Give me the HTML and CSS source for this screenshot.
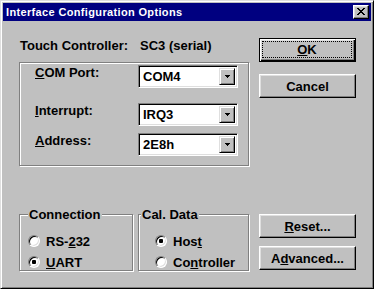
FILE: index.html
```html
<!DOCTYPE html>
<html lang="en">
<head>
  <meta charset="UTF-8" />
  <title>Interface Configuration Options</title>
  <link rel="stylesheet" href="styles.css">
</head>
<body>
  <div class="window">
    <div class="titlebar">
      <span class="title">Interface Configuration Options</span>
      <button class="close" aria-label="Close">
        <svg width="8" height="7" viewBox="0 0 8 7" shape-rendering="crispEdges">
          <path fill="#000" d="M0 0h2v1h-2zM6 0h2v1h-2zM1 1h2v1h-2zM5 1h2v1h-2zM2 2h4v1h-4zM3 3h2v1h-2zM2 4h4v1h-4zM1 5h2v1h-2zM5 5h2v1h-2zM0 6h2v1h-2zM6 6h2v1h-2z"/>
        </svg>
      </button>
    </div>

    <div class="client">
      <div class="section top">
        <div class="main">
          <div class="controller">
            <span class="controller-label">Touch Controller:</span>
            <span>SC3 (serial)</span>
          </div>

          <div class="etched port-group">
            <div class="field field-com">
              <label><u>C</u>OM Port:</label>
              <div class="combo">
                <span class="combo-value">COM4</span>
                <span class="combo-button">
                  <svg width="5" height="3" viewBox="0 0 5 3" shape-rendering="crispEdges"><path fill="#000" d="M0 0h5v1h-5zM1 1h3v1h-3zM2 2h1v1h-1z"/></svg>
                </span>
              </div>
            </div>
            <div class="field field-irq">
              <label><u>I</u>nterrupt:</label>
              <div class="combo">
                <span class="combo-value">IRQ3</span>
                <span class="combo-button">
                  <svg width="5" height="3" viewBox="0 0 5 3" shape-rendering="crispEdges"><path fill="#000" d="M0 0h5v1h-5zM1 1h3v1h-3zM2 2h1v1h-1z"/></svg>
                </span>
              </div>
            </div>
            <div class="field field-addr">
              <label><u>A</u>ddress:</label>
              <div class="combo">
                <span class="combo-value">2E8h</span>
                <span class="combo-button">
                  <svg width="5" height="3" viewBox="0 0 5 3" shape-rendering="crispEdges"><path fill="#000" d="M0 0h5v1h-5zM1 1h3v1h-3zM2 2h1v1h-1z"/></svg>
                </span>
              </div>
            </div>
          </div>
        </div>

        <div class="buttons">
          <button class="btn btn-default btn-ok"><span class="focus-ring"><u>O</u>K</span></button>
          <button class="btn btn-cancel">Cancel</button>
        </div>
      </div>

      <div class="section bottom">
        <div class="options">
          <div class="etched group-box connection">
            <span class="group-title">Connection</span>
            <div class="radio-row first"><span class="radio"></span><span class="radio-text">RS-<u>2</u>32</span></div>
            <div class="radio-row"><span class="radio checked"></span><span class="radio-text"><u>U</u>ART</span></div>
          </div>
          <div class="etched group-box cal-data">
            <span class="group-title">Cal. Data</span>
            <div class="radio-row first"><span class="radio checked"></span><span class="radio-text">Hos<u>t</u></span></div>
            <div class="radio-row"><span class="radio"></span><span class="radio-text">Co<u>n</u>troller</span></div>
          </div>
        </div>

        <div class="buttons">
          <button class="btn btn-reset"><u>R</u>eset...</button>
          <button class="btn btn-advanced">A<u>d</u>vanced...</button>
        </div>
      </div>
    </div>
  </div>
</body>
</html>
```

FILE: styles.css
```css
body {
  margin: 0;
  background: #c0c0c0;
  font-family: "Liberation Sans", Arial, sans-serif;
  font-size: 13px;
  font-weight: bold;
  line-height: 15px;
  color: #000;
}
u {
  text-decoration: underline;
  text-underline-offset: 1px;
}

/* window frame */
.window {
  width: 374px;
  height: 289px;
  box-sizing: border-box;
  padding: 2px;
  background: #c0c0c0;
  border: 1px solid;
  border-color: #dfdfdf #000 #000 #dfdfdf;
  box-shadow: inset 1px 1px #fff, inset -1px -1px #808080;
}
.titlebar {
  height: 18px;
  background: #000080;
  color: #fff;
  display: flex;
  align-items: center;
  justify-content: space-between;
  padding: 0 2px 0 3px;
  font-size: 11px;
  line-height: 13px;
}
.title {
  letter-spacing: 0.35px;
}
.close {
  width: 16px;
  height: 14px;
  box-sizing: border-box;
  padding: 0;
  background: #c0c0c0;
  border: 1px solid;
  border-color: #fff #000 #000 #fff;
  box-shadow: inset -1px -1px #808080, inset 1px 1px #dfdfdf;
  display: flex;
  align-items: center;
  justify-content: center;
}
.close svg {
  display: block;
  margin: 0 1px 1px 0;
}

/* layout */
.section {
  display: flex;
}
.main {
  margin-left: 16px;
  width: 230px;
}
.buttons {
  margin-left: 10px;
  width: 97px;
  display: flex;
  flex-direction: column;
}
.controller {
  margin-top: 17px;
  padding-left: 1px;
  display: flex;
}
.controller-label {
  width: 120px;
}

/* etched frames */
.etched {
  box-sizing: border-box;
  border: 1px solid #808080;
  box-shadow: inset 1px 1px #fff, 1px 1px #fff;
}
.port-group {
  margin-top: 9px;
  height: 104px;
  padding-left: 15px;
}
.field {
  display: flex;
  align-items: flex-start;
}
.field label {
  width: 103px;
}
.field-com { margin-top: 2px; }
.field-irq { margin-top: 15px; }
.field-addr { margin-top: 7px; }

.combo {
  width: 100px;
  height: 23px;
  box-sizing: border-box;
  padding: 2px;
  background: #fff;
  border: 1px solid;
  border-color: #808080 #fff #fff #808080;
  box-shadow: inset 1px 1px #000, inset -1px -1px #dfdfdf;
  display: flex;
  align-items: center;
}
.combo-value {
  flex: 1;
  padding-left: 2px;
}
.combo-button {
  width: 16px;
  height: 100%;
  box-sizing: border-box;
  background: #c0c0c0;
  border: 1px solid;
  border-color: #dfdfdf #000 #000 #dfdfdf;
  box-shadow: inset 1px 1px #fff, inset -1px -1px #808080;
  display: flex;
  align-items: center;
  justify-content: center;
}
.combo-button svg {
  display: block;
}

/* push buttons */
.btn {
  width: 97px;
  height: 24px;
  box-sizing: border-box;
  padding: 0;
  font: inherit;
  color: #000;
  background: #c0c0c0;
  border: 1px solid;
  border-color: #fff #000 #000 #fff;
  box-shadow: inset -1px -1px #808080, inset 1px 1px #dfdfdf;
}
.btn-default {
  border-color: #000;
  box-shadow: inset 1px 1px #fff, inset -1px -1px #000, inset -2px -2px #808080, inset 2px 2px #dfdfdf;
  display: flex;
  padding: 2px 3px 3px 2px;
}
.focus-ring {
  flex: 1;
  border: 1px dotted #000;
  display: flex;
  align-items: center;
  justify-content: center;
}
.btn-ok { margin-top: 17px; }
.btn-cancel { margin-top: 12px; }

/* bottom group boxes */
.bottom {
  margin-top: 42px;
}
.options {
  margin-left: 16px;
  width: 230px;
  display: flex;
  gap: 5px;
}
.group-box {
  position: relative;
  margin-top: 6px;
  height: 57px;
}
.connection { width: 114px; padding-left: 8px; }
.cal-data { width: 111px; padding-left: 16px; }
.group-title {
  position: absolute;
  top: -8px;
  left: 8px;
  padding: 0 1px;
  background: #c0c0c0;
}
.cal-data .group-title {
  left: 2px;
}
.radio-row {
  display: flex;
  align-items: center;
  height: 12px;
  margin-top: 9px;
}
.radio-row.first {
  margin-top: 20px;
}
.radio {
  width: 12px;
  height: 12px;
  box-sizing: border-box;
  border-radius: 50%;
  background: #fff;
  border: 1px solid;
  border-color: #808080 #fff #fff #808080;
  box-shadow: inset 1px 1px #000, inset -1px -1px #dfdfdf;
}
.radio.checked {
  background: radial-gradient(circle, #000 2px, #fff 2.5px);
}
.radio-text {
  margin-left: 6px;
}
.btn-reset { margin-top: 6px; }
.btn-advanced { margin-top: 8px; }
```
